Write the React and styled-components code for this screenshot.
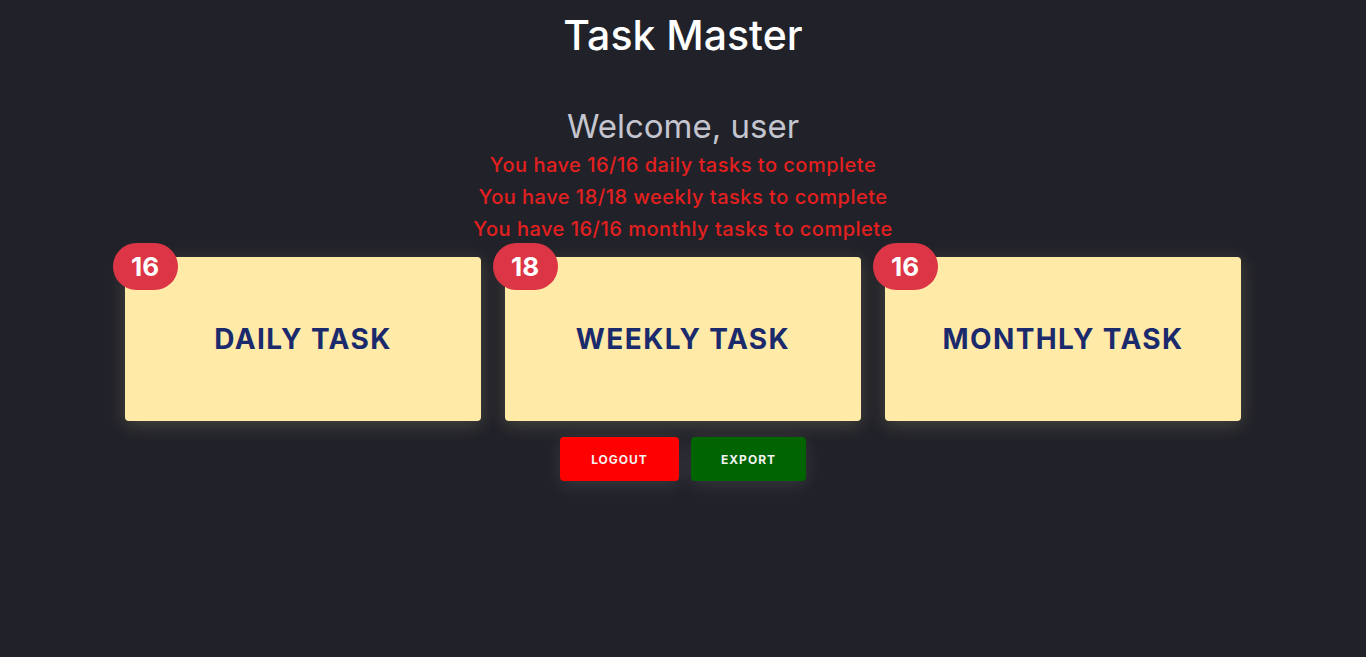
import React from "react";
import styled, { createGlobalStyle } from "styled-components";

const Global = createGlobalStyle`
  html, body { margin: 0; padding: 0; background: #212229; }
  body { font-family: "Inter", "Open Sans", "Liberation Sans", sans-serif; }
  * { box-sizing: border-box; }
`;

const Page = styled.div`
  min-height: 657px;
  background: #212229;
  display: flex;
  flex-direction: column;
  align-items: center;
`;

const Title = styled.h1`
  margin: 10px 0 0;
  font-size: 41px;
  line-height: 50px;
  font-weight: 500;
  color: #ffffff;
`;

const Welcome = styled.h2`
  margin: 46px 0 3px;
  font-size: 33px;
  line-height: 40px;
  font-weight: 400;
  color: #c4c5cf;
`;

const Notice = styled.p`
  margin: 0;
  font-size: 20px;
  line-height: 32px;
  font-weight: 500;
  letter-spacing: 0.5px;
  color: #e3201f;
`;

const Cards = styled.div`
  display: flex;
  gap: 24px;
  margin-top: 12px;
`;

const Card = styled.div`
  position: relative;
  width: 356px;
  height: 164px;
  background: #ffeaa7;
  border-radius: 4px;
  box-shadow: 0 4px 18px rgba(255, 234, 167, 0.18);
  display: flex;
  align-items: center;
  justify-content: center;
`;

const CardLabel = styled.span`
  font-size: 28px;
  font-weight: 700;
  letter-spacing: 1.4px;
  color: #1a2a6c;
`;

const Badge = styled.span`
  position: absolute;
  left: -12px;
  top: -14px;
  width: 65px;
  height: 47px;
  border-radius: 24px;
  background: #dc3545;
  color: #fff;
  font-size: 26px;
  font-weight: 700;
  display: flex;
  align-items: center;
  padding-left: 18px;
`;

const Actions = styled.div`
  display: flex;
  gap: 12px;
  margin-top: 16px;
`;

const Button = styled.button`
  width: ${(p) => p.$w}px;
  height: 44px;
  border: none;
  border-radius: 4px;
  background: ${(p) => p.$bg};
  color: #f3f3f3;
  font-family: inherit;
  font-size: 12px;
  font-weight: 700;
  letter-spacing: 1px;
  box-shadow: 0 4px 18px rgba(255, 255, 255, 0.1);
`;

const tasks = [
  { n: 16, label: "DAILY TASK" },
  { n: 18, label: "WEEKLY TASK" },
  { n: 16, label: "MONTHLY TASK" },
];

export default function App() {
  return (
    <Page>
      <Global />
      <Title>Task Master</Title>
      <Welcome>Welcome, user</Welcome>
      <Notice>You have 16/16 daily tasks to complete</Notice>
      <Notice>You have 18/18 weekly tasks to complete</Notice>
      <Notice>You have 16/16 monthly tasks to complete</Notice>
      <Cards>
        {tasks.map((t) => (
          <Card key={t.label}>
            <Badge>{t.n}</Badge>
            <CardLabel>{t.label}</CardLabel>
          </Card>
        ))}
      </Cards>
      <Actions>
        <Button $w={119} $bg="#ff0000">LOGOUT</Button>
        <Button $w={115} $bg="#006400">EXPORT</Button>
      </Actions>
    </Page>
  );
}
